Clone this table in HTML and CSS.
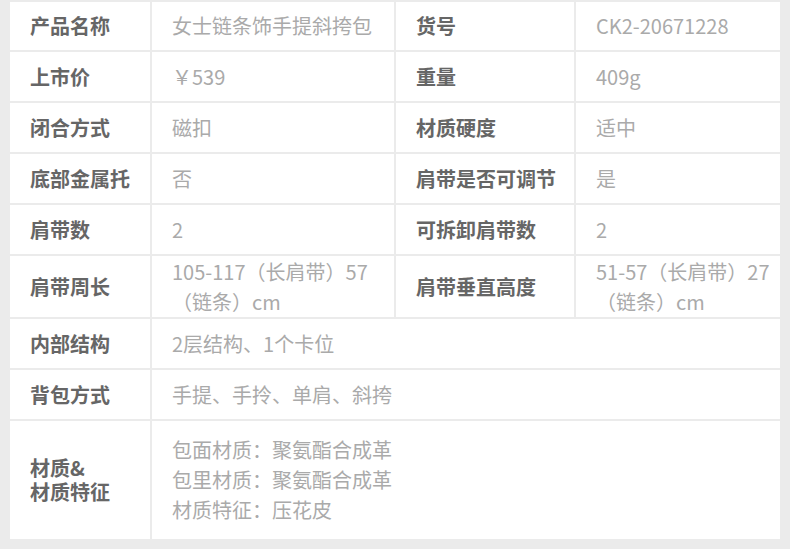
FILE: index.html
```html
<!DOCTYPE html>
<html lang="zh-CN">
<head>
<meta charset="utf-8">
<title>商品参数</title>
<link rel="stylesheet" href="styles.css">
</head>
<body>
<div class="page">
  <div class="spec">
    <div class="cell label">产品名称</div>
    <div class="cell value">女士链条饰手提斜挎包</div>
    <div class="cell label">货号</div>
    <div class="cell value">CK2-20671228</div>

    <div class="cell label">上市价</div>
    <div class="cell value">￥539</div>
    <div class="cell label">重量</div>
    <div class="cell value">409g</div>

    <div class="cell label">闭合方式</div>
    <div class="cell value">磁扣</div>
    <div class="cell label">材质硬度</div>
    <div class="cell value">适中</div>

    <div class="cell label">底部金属托</div>
    <div class="cell value">否</div>
    <div class="cell label">肩带是否可调节</div>
    <div class="cell value">是</div>

    <div class="cell label">肩带数</div>
    <div class="cell value">2</div>
    <div class="cell label">可拆卸肩带数</div>
    <div class="cell value">2</div>

    <div class="cell label">肩带周长</div>
    <div class="cell value">105-117（长肩带）57（链条）cm</div>
    <div class="cell label">肩带垂直高度</div>
    <div class="cell value">51-57（长肩带）27（链条）cm</div>

    <div class="cell label">内部结构</div>
    <div class="cell value wide">2层结构、1个卡位</div>

    <div class="cell label">背包方式</div>
    <div class="cell value wide">手提、手拎、单肩、斜挎</div>

    <div class="cell label">
      <div class="lines">
        <div>材质&amp;</div>
        <div>材质特征</div>
      </div>
    </div>
    <div class="cell value wide">
      <div class="lines">
        <div>包面材质：聚氨酯合成革</div>
        <div>包里材质：聚氨酯合成革</div>
        <div>材质特征：压花皮</div>
      </div>
    </div>
  </div>
</div>
</body>
</html>
```

FILE: styles.css
```css
html, body {
  margin: 0;
  padding: 0;
  background: #ebebeb;
}

.page {
  width: 790px;
  height: 549px;
  box-sizing: border-box;
  padding: 2px 10px 10px 10px;
  font-family: "Noto Sans CJK SC", "Noto Sans", sans-serif;
}

.spec {
  display: grid;
  grid-template-columns: 140px 242px 178px 204px;
  grid-template-rows: 48px 49px 49px 49px 49px 61px 49px 49px 118px;
  gap: 2px;
  background: #ebebeb;
}

.cell {
  background: #ffffff;
  display: flex;
  align-items: center;
  box-sizing: border-box;
  padding: 0 8px 0 20px;
  font-size: 20px;
}

.label {
  color: #666666;
  font-weight: 700;
  line-height: 24px;
}

.value {
  color: #aaaaaa;
  font-weight: 400;
  line-height: 30px;
}

.wide {
  grid-column: span 3;
}
```
